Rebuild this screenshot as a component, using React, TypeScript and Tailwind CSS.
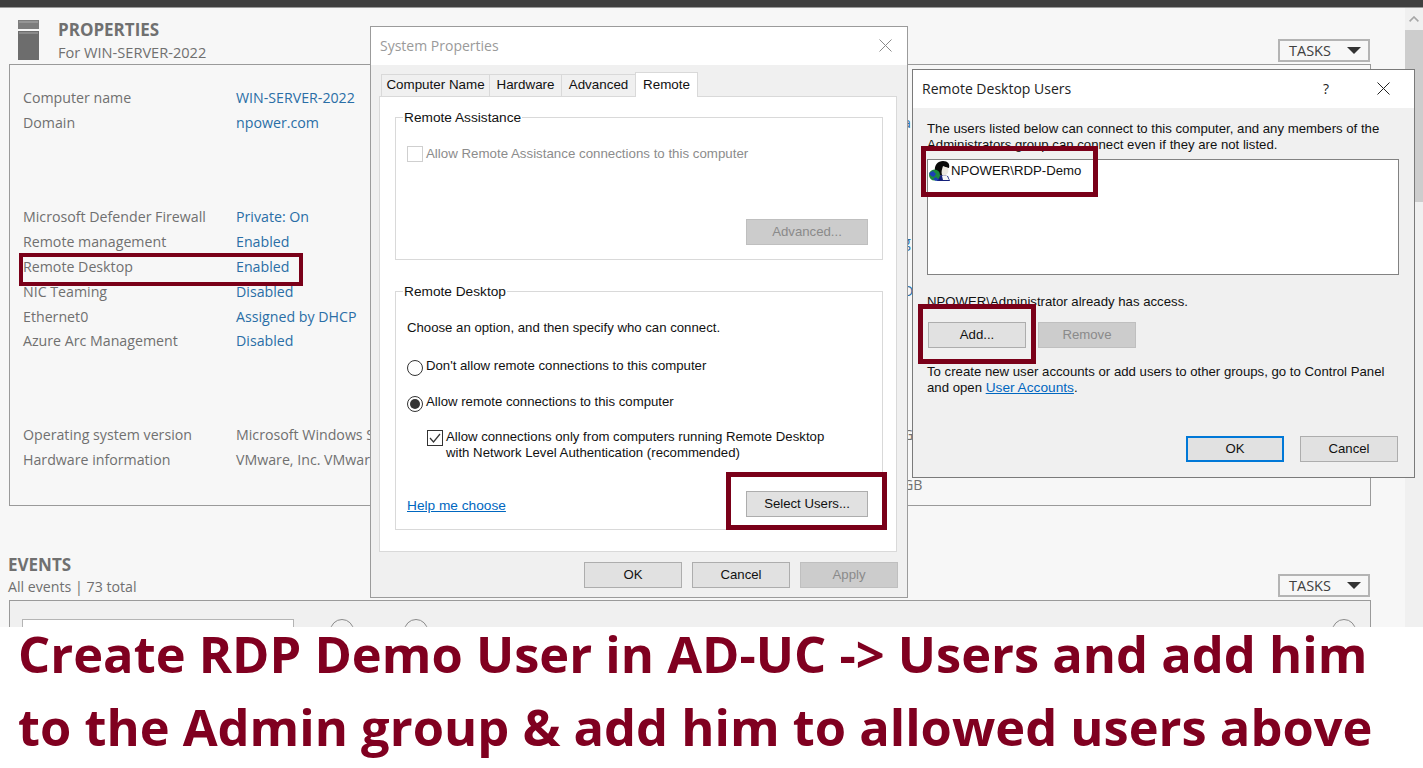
const SEGOE = "font-['Open_Sans','Noto_Sans',sans-serif]";
const DLG = "font-['Liberation_Sans',Arial,sans-serif]";
const RED = "border-[#7a0019]";

function Row({ label, value, muted }: { label: string; value: string; muted?: boolean }) {
  return (
    <div className="flex h-[24.9px] items-center whitespace-nowrap text-[14.2px]">
      <span className="w-[213px] text-[#707070]">{label}</span>
      <span className={muted ? "text-[#707070]" : "text-[#2a6ea6]"}>{value}</span>
    </div>
  );
}

function Tasks() {
  return (
    <div className="flex h-[23px] w-[92px] items-center justify-between border-2 border-[#b4b4b4] bg-[#f7f7f7] pl-[9px] pr-[7px] text-[14.5px] text-[#404040]">
      <span>TASKS</span>
      <svg width="14" height="7" viewBox="0 0 14 7"><path d="M0 0h14L7 7z" fill="#333" /></svg>
    </div>
  );
}

function Btn({ children, w = "w-[98px]", disabled, primary }: { children: React.ReactNode; w?: string; disabled?: boolean; primary?: boolean }) {
  const tone = disabled
    ? "bg-[#cccccc] border-[#bfbfbf] text-[#8a8a8a]"
    : primary
      ? "bg-[#e1e1e1] border-2 border-[#0078d7] text-[#111]"
      : "bg-[#e1e1e1] border-[#adadad] text-[#111]";
  return <div className={`flex h-[26px] items-center justify-center border ${w} ${tone} text-[13.2px]`}>{children}</div>;
}

function Group({ title, className, children }: { title: string; className: string; children: React.ReactNode }) {
  return (
    <div className={`relative border border-[#d9d9d9] ${className}`}>
      <span className="absolute -top-[8px] left-[7px] bg-white px-[1px] text-[13.7px] leading-[16px] text-[#111]">{title}</span>
      {children}
    </div>
  );
}

function Radio({ checked }: { checked?: boolean }) {
  return (
    <span className="mt-[3px] flex h-[16px] w-[16px] shrink-0 items-center justify-center rounded-full border border-[#333] bg-white">
      {checked && <span className="h-[10px] w-[10px] rounded-full bg-[#333]" />}
    </span>
  );
}

function UserIcon() {
  return (
    <svg width="22" height="22" viewBox="0 0 22 22" className="shrink-0">
      <path d="M8 16l4-2 7 1 2 5H8z" fill="#14207a" />
      <path d="M6 10C5 4 9 0 14 0c5 0 7 3 6 7l-5-1-2 8-4 1z" fill="#0a0a0a" />
      <circle cx="5.5" cy="14" r="5.5" fill="#1c8a3e" />
      <path d="M0 12l4-2 3 3-2 3-3-1zM4 18l3-2 3 3-3 1z" fill="#1d3fb8" />
      <path d="M14 5l5 2c1 2 0 5-1 6-2 2-4 2-5 1-1-3 0-6 1-9z" fill="#ece8e0" />
      <path d="M13 15h5l2 4-6 0z" fill="#f6f6f6" />
    </svg>
  );
}

export default function App() {
  return (
    <div className={`relative h-[768px] w-[1423px] overflow-hidden bg-[#f7f7f7] ${SEGOE}`}>
      <div className="h-[8px] border-b border-[#9a9a9a] bg-[#3f3f3f]" />

      <div className="w-[1405px]">
        <div className="flex h-[56px] pl-[18px] pt-[12px]">
          <svg width="21" height="40" viewBox="0 0 21 40" className="shrink-0">
            <rect width="21" height="9" fill="#7d7d7d" />
            <rect x="1" y="1" width="19" height="2" fill="#959595" />
            <rect y="11" width="21" height="29" fill="#6d6d6d" />
            <rect x="1" y="12" width="19" height="2" fill="#8a8a8a" />
          </svg>
          <div className="ml-[19px] whitespace-nowrap">
            <div className="text-[17px] font-bold leading-[20px] text-[#707070]">PROPERTIES</div>
            <div className="text-[14.6px] leading-[24px] text-[#707070]">For WIN-SERVER-2022</div>
          </div>
          <div className="ml-auto mr-[35px] mt-[19px]"><Tasks /></div>
        </div>

        <div className="ml-[9px] flex h-[442px] w-[1362px] border border-[#9a9a9a] pl-[13px] pt-[20.6px]">
          <div className="w-[880px]">
            <Row label="Computer name" value="WIN-SERVER-2022" />
            <Row label="Domain" value="npower.com" />
            <div className="h-[68.8px]" />
            <Row label="Microsoft Defender Firewall" value="Private: On" />
            <Row label="Remote management" value="Enabled" />
            <Row label="Remote Desktop" value="Enabled" />
            <Row label="NIC Teaming" value="Disabled" />
            <Row label="Ethernet0" value="Assigned by DHCP" />
            <Row label="Azure Arc Management" value="Disabled" />
            <div className="h-[68.4px]" />
            <Row label="Operating system version" value="Microsoft Windows S" muted />
            <Row label="Hardware information" value="VMware, Inc. VMwar" muted />
          </div>
          <div className="whitespace-nowrap text-[14.2px] text-[#707070]">
            <div className="pt-[24px] leading-[25px] text-[#2a6ea6]">a</div>
            <div className="pt-[69px] leading-[25px] text-[#2a6ea6]">i</div>
            <div className="leading-[25px] text-[#2a6ea6]">g</div>
            <div className="pt-[24px] leading-[25px] text-[#2a6ea6]">D</div>
            <div className="pt-[119px] leading-[25px]">G</div>
            <div className="pt-[25px] leading-[25px]">GB</div>
          </div>
        </div>

        <div className="flex h-[94px] items-start justify-between pl-[8px] pr-[35px]">
          <div className="whitespace-nowrap pt-[48px]">
            <div className="text-[17px] font-bold leading-[22px] text-[#707070]">EVENTS</div>
            <div className="text-[14.2px] leading-[22px] text-[#707070]">All events | 73 total</div>
          </div>
          <div className="mt-[68px]"><Tasks /></div>
        </div>

        <div className="ml-[9px] h-[100px] w-[1362px] border border-[#9a9a9a] bg-[#f0f0f0] px-[12px] pt-[18px]">
          <div className="flex items-start">
            <div className="h-[30px] w-[272px] border border-[#b4b4b4] bg-white" />
            <div className="ml-[36px] h-[24px] w-[24px] rounded-full border border-[#8a8a8a]" />
            <div className="ml-[50px] h-[24px] w-[24px] rounded-full border border-[#8a8a8a]" />
            <div className="ml-auto mr-[2px] h-[24px] w-[24px] rounded-full border border-[#8a8a8a]" />
          </div>
        </div>
      </div>

      {/* scrollbar */}
      <div className="absolute bottom-0 right-0 top-[8px] flex w-[18px] flex-col bg-[#f0f0f0]">
        <div className="flex h-[22px] items-center justify-center">
          <svg width="10" height="6" viewBox="0 0 10 6" fill="none" stroke="#a6a6a6" strokeWidth="1.6"><path d="M.6 5.4L5 1l4.4 4.4" /></svg>
        </div>
        <div className="h-[172px] bg-[#cdcdcd]" />
      </div>

      {/* System Properties */}
      <div className={`absolute left-[370px] top-[26px] flex h-[572px] w-[538px] flex-col border border-[#9b9b9b] bg-[#f0f0f0] ${DLG}`}>
        <div className="flex h-[38px] shrink-0 items-center justify-between bg-white pb-[2px] pl-[9px] pr-[15px] text-[14px] text-[#9a9a9a]">
          <span className={SEGOE}>System Properties</span>
          <svg width="13" height="13" viewBox="0 0 13 13" stroke="#8a8a8a" strokeWidth="1"><path d="M.5.5l12 12M12.5.5l-12 12" /></svg>
        </div>
        <div className="flex h-[31px] shrink-0 items-end pl-[10px] text-[13.4px] text-[#111]">
          <div className="flex h-[22px] w-[109px] items-center justify-center border border-b-0 border-[#d9d9d9]">Computer Name</div>
          <div className="flex h-[22px] w-[72px] items-center justify-center border-r border-t border-[#d9d9d9]">Hardware</div>
          <div className="flex h-[22px] w-[73px] items-center justify-center border-t border-[#d9d9d9]">Advanced</div>
          <div className="z-10 -mb-px flex h-[25px] w-[63px] items-center justify-center border border-b-0 border-[#d9d9d9] bg-white">Remote</div>
        </div>
        <div className="ml-[8px] h-[456px] w-[518px] border border-[#d9d9d9] bg-white pl-[15px] pr-[13px] pt-[20px]">
          <Group title="Remote Assistance" className="h-[143px] pl-[11px] pr-[14px] pt-[28px]">
            <div className="flex h-[16px] items-center text-[13.3px] text-[#8c8c8c]">
              <span className="mr-[3px] h-[16px] w-[16px] border border-[#cfcfcf] bg-white" />
              <span>Allow Remote Assistance connections to this computer</span>
            </div>
            <div className="mt-[57px] flex justify-end">
              <Btn w="w-[122px]" disabled>Advanced...</Btn>
            </div>
          </Group>
          <Group title="Remote Desktop" className="mt-[31px] h-[239px] pl-[11px] pr-[14px] pt-[27px]">
            <div className="h-[18px] text-[13.2px] leading-[18px] text-[#111]">Choose an option, and then specify who can connect.</div>
            <div className="mt-[20px] flex gap-[3px] text-[13.2px] leading-[18px] text-[#111]"><Radio /><span>Don't allow remote connections to this computer</span></div>
            <div className="mt-[17px] flex gap-[3px] text-[13.2px] leading-[18px] text-[#111]"><Radio checked /><span>Allow remote connections to this computer</span></div>
            <div className="ml-[20px] mt-[17px] flex gap-[3px] text-[13.2px] leading-[16px] text-[#111]">
              <span className="mt-[1px] flex h-[16px] w-[16px] shrink-0 items-center justify-center border border-[#333] bg-white">
                <svg width="12" height="10" viewBox="0 0 12 10" fill="none" stroke="#333" strokeWidth="1.2"><path d="M1 5l3.5 4L11 1" /></svg>
              </span>
              <span>Allow connections only from computers running Remote Desktop<br />with Network Level Authentication (recommended)</span>
            </div>
            <div className="mt-[30px] flex items-center justify-between">
              <span className="pt-[4px] text-[13.7px] text-[#0067c0] underline">Help me choose</span>
              <Btn w="w-[122px]">Select Users...</Btn>
            </div>
          </Group>
        </div>
        <div className="mt-[10px] flex justify-end gap-[10px] pr-[9px]">
          <Btn>OK</Btn>
          <Btn>Cancel</Btn>
          <Btn disabled>Apply</Btn>
        </div>
      </div>

      {/* Remote Desktop Users */}
      <div className={`absolute left-[912px] top-[69px] flex h-[409px] w-[503px] flex-col border border-[#7a7a7a] bg-[#f0f0f0] ${DLG}`}>
        <div className="flex h-[38px] shrink-0 items-center justify-between bg-white pb-[2px] pl-[9px] pr-[24px] text-[14px] text-[#222]">
          <span className={SEGOE}>Remote Desktop Users</span>
          <div className="flex items-center gap-[48px]">
            <span className={SEGOE}>?</span>
            <svg width="13" height="13" viewBox="0 0 13 13" stroke="#222" strokeWidth="1"><path d="M.5.5l12 12M12.5.5l-12 12" /></svg>
          </div>
        </div>
        <div className="flex-1 px-[14px] pt-[13px] text-[13.2px] leading-[16px] text-[#111]">
          <div>The users listed below can connect to this computer, and any members of the<br />Administrators group can connect even if they are not listed.</div>
          <div className="mt-[6px] flex h-[116px] w-[472px] items-start border border-[#828282] bg-white pl-[1px] pt-[1px]">
            <UserIcon />
            <span className="leading-[20px]">NPOWER\RDP-Demo</span>
          </div>
          <div className="mt-[19px]">NPOWER\Administrator already has access.</div>
          <div className="ml-[1px] mt-[12px] flex gap-[12px]">
            <Btn>Add...</Btn>
            <Btn disabled>Remove</Btn>
          </div>
          <div className="mt-[16px]">To create new user accounts or add users to other groups, go to Control Panel<br />and open <span className="text-[13.7px] text-[#0067c0] underline">User Accounts</span>.</div>
          <div className="mt-[40px] flex justify-end gap-[16px] pr-[2px]">
            <Btn primary>OK</Btn>
            <Btn>Cancel</Btn>
          </div>
        </div>
      </div>

      {/* Highlights */}
      <div className={`absolute left-[19px] top-[253px] h-[33px] w-[284px] border-[4px] ${RED}`} />
      <div className={`absolute left-[726px] top-[472px] h-[58px] w-[161px] border-[5px] ${RED}`} />
      <div className={`absolute left-[921px] top-[146px] h-[51px] w-[177px] border-[5px] ${RED}`} />
      <div className={`absolute left-[918px] top-[304px] h-[60px] w-[118px] border-[5px] ${RED}`} />

      {/* Caption */}
      <div className="absolute inset-x-0 bottom-0 top-[627px] whitespace-nowrap bg-white pl-[18px] text-[50.6px] font-bold leading-[73px] text-[#800020]">
        <div className="-mt-[10px]">Create RDP Demo User in AD-UC -&gt; Users and add him</div>
        <div>to the Admin group &amp; add him to allowed users above</div>
      </div>
    </div>
  );
}
